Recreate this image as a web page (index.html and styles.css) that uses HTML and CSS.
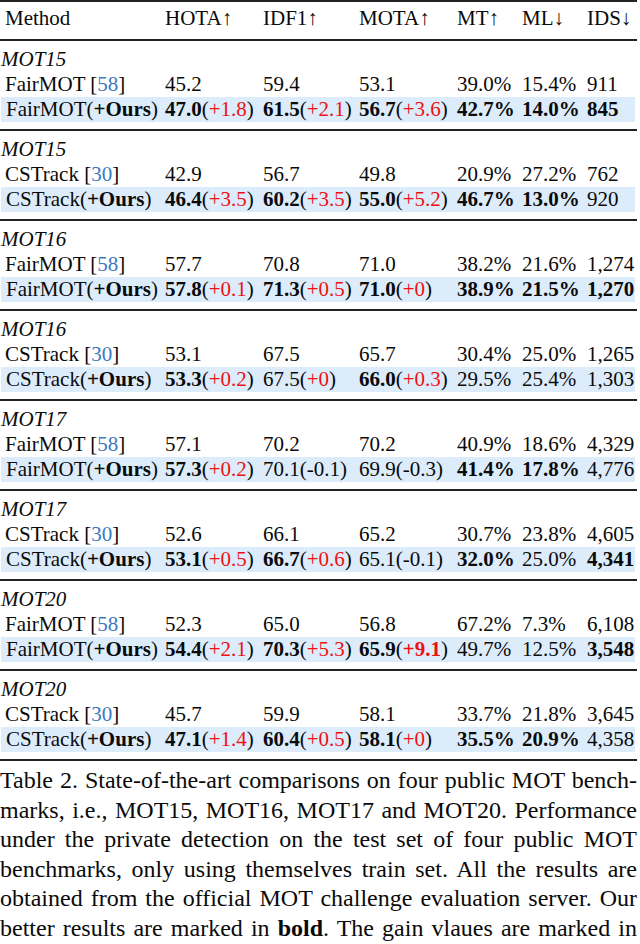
FILE: index.html
```html
<!DOCTYPE html>
<html>
<head>
<meta charset="utf-8">
<link rel="stylesheet" href="styles.css">
</head>
<body>
<div class="table">
  <div class="row head">
    <div class="c">Method</div><div class="c">HOTA↑</div><div class="c">IDF1↑</div><div class="c">MOTA↑</div><div class="c">MT↑</div><div class="c">ML↓</div><div class="c">IDS↓</div>
  </div>

  <div class="group">
    <div class="glabel">MOT15</div>
    <div class="row"><div class="c">FairMOT [<span class="ref">58</span>]</div><div class="c">45.2</div><div class="c">59.4</div><div class="c">53.1</div><div class="c">39.0%</div><div class="c">15.4%</div><div class="c">911</div></div>
    <div class="row hl"><div class="c">FairMOT(<b>+Ours</b>)</div><div class="c"><b>47.0</b>(<span class="g">+1.8</span>)</div><div class="c"><b>61.5</b>(<span class="g">+2.1</span>)</div><div class="c"><b>56.7</b>(<span class="g">+3.6</span>)</div><div class="c"><b>42.7%</b></div><div class="c"><b>14.0%</b></div><div class="c"><b>845</b></div></div>
  </div>

  <div class="group">
    <div class="glabel">MOT15</div>
    <div class="row"><div class="c">CSTrack [<span class="ref">30</span>]</div><div class="c">42.9</div><div class="c">56.7</div><div class="c">49.8</div><div class="c">20.9%</div><div class="c">27.2%</div><div class="c">762</div></div>
    <div class="row hl"><div class="c">CSTrack(<b>+Ours</b>)</div><div class="c"><b>46.4</b>(<span class="g">+3.5</span>)</div><div class="c"><b>60.2</b>(<span class="g">+3.5</span>)</div><div class="c"><b>55.0</b>(<span class="g">+5.2</span>)</div><div class="c"><b>46.7%</b></div><div class="c"><b>13.0%</b></div><div class="c">920</div></div>
  </div>

  <div class="group">
    <div class="glabel">MOT16</div>
    <div class="row"><div class="c">FairMOT [<span class="ref">58</span>]</div><div class="c">57.7</div><div class="c">70.8</div><div class="c">71.0</div><div class="c">38.2%</div><div class="c">21.6%</div><div class="c">1,274</div></div>
    <div class="row hl"><div class="c">FairMOT(<b>+Ours</b>)</div><div class="c"><b>57.8</b>(<span class="g">+0.1</span>)</div><div class="c"><b>71.3</b>(<span class="g">+0.5</span>)</div><div class="c"><b>71.0</b>(<span class="g">+0</span>)</div><div class="c"><b>38.9%</b></div><div class="c"><b>21.5%</b></div><div class="c"><b>1,270</b></div></div>
  </div>

  <div class="group">
    <div class="glabel">MOT16</div>
    <div class="row"><div class="c">CSTrack [<span class="ref">30</span>]</div><div class="c">53.1</div><div class="c">67.5</div><div class="c">65.7</div><div class="c">30.4%</div><div class="c">25.0%</div><div class="c">1,265</div></div>
    <div class="row hl"><div class="c">CSTrack(<b>+Ours</b>)</div><div class="c"><b>53.3</b>(<span class="g">+0.2</span>)</div><div class="c">67.5(<span class="g">+0</span>)</div><div class="c"><b>66.0</b>(<span class="g">+0.3</span>)</div><div class="c">29.5%</div><div class="c">25.4%</div><div class="c">1,303</div></div>
  </div>

  <div class="group">
    <div class="glabel">MOT17</div>
    <div class="row"><div class="c">FairMOT [<span class="ref">58</span>]</div><div class="c">57.1</div><div class="c">70.2</div><div class="c">70.2</div><div class="c">40.9%</div><div class="c">18.6%</div><div class="c">4,329</div></div>
    <div class="row hl"><div class="c">FairMOT(<b>+Ours</b>)</div><div class="c"><b>57.3</b>(<span class="g">+0.2</span>)</div><div class="c">70.1(-0.1)</div><div class="c">69.9(-0.3)</div><div class="c"><b>41.4%</b></div><div class="c"><b>17.8%</b></div><div class="c">4,776</div></div>
  </div>

  <div class="group">
    <div class="glabel">MOT17</div>
    <div class="row"><div class="c">CSTrack [<span class="ref">30</span>]</div><div class="c">52.6</div><div class="c">66.1</div><div class="c">65.2</div><div class="c">30.7%</div><div class="c">23.8%</div><div class="c">4,605</div></div>
    <div class="row hl"><div class="c">CSTrack(<b>+Ours</b>)</div><div class="c"><b>53.1</b>(<span class="g">+0.5</span>)</div><div class="c"><b>66.7</b>(<span class="g">+0.6</span>)</div><div class="c">65.1(-0.1)</div><div class="c"><b>32.0%</b></div><div class="c">25.0%</div><div class="c"><b>4,341</b></div></div>
  </div>

  <div class="group">
    <div class="glabel">MOT20</div>
    <div class="row"><div class="c">FairMOT [<span class="ref">58</span>]</div><div class="c">52.3</div><div class="c">65.0</div><div class="c">56.8</div><div class="c">67.2%</div><div class="c">7.3%</div><div class="c">6,108</div></div>
    <div class="row hl"><div class="c">FairMOT(<b>+Ours</b>)</div><div class="c"><b>54.4</b>(<span class="g">+2.1</span>)</div><div class="c"><b>70.3</b>(<span class="g">+5.3</span>)</div><div class="c"><b>65.9</b>(<b class="g">+9.1</b>)</div><div class="c">49.7%</div><div class="c">12.5%</div><div class="c"><b>3,548</b></div></div>
  </div>

  <div class="group">
    <div class="glabel">MOT20</div>
    <div class="row"><div class="c">CSTrack [<span class="ref">30</span>]</div><div class="c">45.7</div><div class="c">59.9</div><div class="c">58.1</div><div class="c">33.7%</div><div class="c">21.8%</div><div class="c">3,645</div></div>
    <div class="row hl"><div class="c">CSTrack(<b>+Ours</b>)</div><div class="c"><b>47.1</b>(<span class="g">+1.4</span>)</div><div class="c"><b>60.4</b>(<span class="g">+0.5</span>)</div><div class="c"><b>58.1</b>(<span class="g">+0</span>)</div><div class="c"><b>35.5%</b></div><div class="c"><b>20.9%</b></div><div class="c">4,358</div></div>
  </div>
</div>

<div class="caption">
  <div class="line">Table 2. State-of-the-art comparisons on four public MOT bench-</div>
  <div class="line">marks, i.e., MOT15, MOT16, MOT17 and MOT20. Performance</div>
  <div class="line">under the private detection on the test set of four public MOT</div>
  <div class="line">benchmarks, only using themselves train set. All the results are</div>
  <div class="line">obtained from the official MOT challenge evaluation server. Our</div>
  <div class="line">better results are marked in <b>bold</b>. The gain vlaues are marked in</div>
</div>
</body>
</html>
```

FILE: styles.css
```css
html, body {
  margin: 0;
  padding: 0;
  background: #ffffff;
}
body {
  width: 640px;
  font-family: "Liberation Serif", "Times New Roman", serif;
  font-size: 21px;
  color: #0a0a0a;
}
.table {
  width: 637px;
  border-top: 2px solid #222222;
}
.row {
  display: grid;
  grid-template-columns: 160px 98px 96px 98px 65px 65px 1fr;
  height: 25px;
  line-height: 25px;
  white-space: nowrap;
}
.c {
  padding-left: 5px;
}
.head {
  padding: 4px 0 8px;
  border-bottom: 2px solid #222222;
}
.group {
  padding: 6px 0 7px;
  border-bottom: 2px solid #222222;
}
.glabel {
  height: 25px;
  line-height: 25px;
  font-style: italic;
  padding-left: 1px;
}
.hl {
  background: #ddecfb;
  margin: 0 2px 0 1px;
  grid-template-columns: 159px 98px 96px 98px 65px 65px 1fr;
}
.ref {
  color: #3a7bc0;
}
.g {
  color: #ee1111;
}
b {
  font-weight: bold;
}
.caption {
  width: 637px;
  padding-top: 5px;
  font-size: 24px;
  line-height: 29.5px;
}
.line {
  text-align: justify;
  text-align-last: justify;
  white-space: nowrap;
}
```
